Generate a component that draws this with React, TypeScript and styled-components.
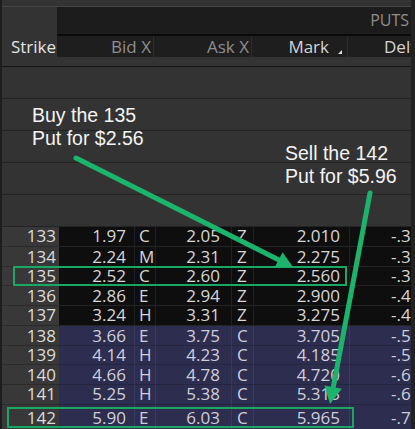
import styled, { createGlobalStyle } from "styled-components";

const GlobalStyle = createGlobalStyle`
  html, body {
    margin: 0;
    padding: 0;
    background: #333333;
  }
`;

const COLS = "57px 76px 21px 76px 22px 96px 63px";

type Quote = {
  strike: string;
  bid: string;
  bidX: string;
  ask: string;
  askX: string;
  mark: string;
  delta: string;
  itm?: boolean;
};

const quotes: Quote[] = [
  { strike: "133", bid: "1.97", bidX: "C", ask: "2.05", askX: "Z", mark: "2.010", delta: "-.33" },
  { strike: "134", bid: "2.24", bidX: "M", ask: "2.31", askX: "Z", mark: "2.275", delta: "-.36" },
  { strike: "135", bid: "2.52", bidX: "C", ask: "2.60", askX: "Z", mark: "2.560", delta: "-.39" },
  { strike: "136", bid: "2.86", bidX: "E", ask: "2.94", askX: "Z", mark: "2.900", delta: "-.43" },
  { strike: "137", bid: "3.24", bidX: "H", ask: "3.31", askX: "Z", mark: "3.275", delta: "-.47" },
  { strike: "138", bid: "3.66", bidX: "E", ask: "3.75", askX: "C", mark: "3.705", delta: "-.51", itm: true },
  { strike: "139", bid: "4.14", bidX: "H", ask: "4.23", askX: "C", mark: "4.185", delta: "-.56", itm: true },
  { strike: "140", bid: "4.66", bidX: "H", ask: "4.78", askX: "C", mark: "4.720", delta: "-.61", itm: true },
  { strike: "141", bid: "5.25", bidX: "H", ask: "5.38", askX: "C", mark: "5.315", delta: "-.66", itm: true },
  { strike: "142", bid: "5.90", bidX: "E", ask: "6.03", askX: "C", mark: "5.965", delta: "-.71", itm: true },
];

const Frame = styled.div`
  position: relative;
  width: 415px;
  height: 429px;
  overflow: hidden;
  background: #333333;
  box-sizing: border-box;
  border-left: 2px solid #1d1d1d;
  border-right: 4px solid #222222;
  font-family: "Open Sans", "DejaVu Sans", sans-serif;
  display: flex;
  flex-direction: column;
`;

const TopStrip = styled.div`
  height: 6px;
  flex: none;
  border-bottom: 1px solid #444444;
`;

const GroupRow = styled.div`
  display: grid;
  grid-template-columns: 55px 1fr;
  height: 29px;
  flex: none;
`;

const PutsBand = styled.div`
  background: #1c1c1c;
  border-bottom: 2px solid #0a0a0a;
  color: #8e8e8e;
  font-size: 16px;
  text-align: right;
  padding-right: 2px;
  line-height: 27px;
`;

const HeadRow = styled.div`
  display: grid;
  grid-template-columns: 55px 97px 98px 96px 63px;
  height: 21px;
  flex: none;
`;

const StrikeHead = styled.div`
  color: #e4e4e4;
  font-size: 17px;
  line-height: 21px;
  text-align: right;
  padding-right: 1px;
`;

const HeadCell = styled.div<{ $bright?: boolean; $left?: number }>`
  position: relative;
  background: #1e1e1e;
  border-right: 1px solid #2c2c2c;
  color: ${({ $bright }) => ($bright ? "#d4d4d4" : "#8e8e8e")};
  font-size: 17px;
  line-height: 21px;
  white-space: nowrap;
  overflow: hidden;
  text-align: ${({ $left }) => ($left !== undefined ? "left" : "right")};
  padding: ${({ $left }) => ($left !== undefined ? `0 0 0 ${$left}px` : "0 2px 0 0")};
  &:last-child {
    border-right: none;
  }
`;

const SortMark = styled.span`
  display: inline-block;
  width: 0;
  height: 0;
  margin-left: 9px;
  border-left: 4px solid transparent;
  border-bottom: 4px solid #e0e0e0;
  vertical-align: -1px;
`;

const Gap = styled.div`
  height: 9px;
  flex: none;
  border-bottom: 1px solid #161616;
`;

const EmptyRow = styled.div`
  height: 31px;
  flex: none;
  background: #333333;
  border-bottom: 1px solid #232323;
`;

const DataRow = styled.div<{ $itm?: boolean; $h: number }>`
  display: grid;
  grid-template-columns: ${COLS};
  height: ${({ $h }) => $h}px;
  flex: none;
  font-size: 17px;
  line-height: ${({ $h }) => $h - 1}px;
  color: ${({ $itm }) => ($itm ? "#cfcfdc" : "#d6d6d6")};
  --cell: ${({ $itm }) => ($itm ? "#2d2d4f" : "#0e0e0e")};
  --hline: ${({ $itm }) => ($itm ? "#25253f" : "#242424")};
  --vline: ${({ $itm }) => ($itm ? "#3a3a5a" : "#202020")};
`;

const StrikeCell = styled.div`
  background: #383838;
  border-bottom: 1px solid #2a2a2a;
  text-align: right;
  padding-right: 3px;
  color: #dcdcdc;
`;

const Cell = styled.div<{ $pad: string; $align: "left" | "right"; $clip?: boolean }>`
  background: var(--cell);
  border-bottom: 1px solid var(--hline);
  border-right: 1px solid var(--vline);
  text-align: ${({ $align }) => $align};
  padding: ${({ $pad }) => $pad};
  white-space: nowrap;
  overflow: ${({ $clip }) => ($clip ? "hidden" : "visible")};
  &:last-child {
    border-right: none;
  }
`;

const Box = styled.div<{ $x: number; $y: number; $w: number; $h: number }>`
  position: absolute;
  left: ${({ $x }) => $x}px;
  top: ${({ $y }) => $y}px;
  width: ${({ $w }) => $w}px;
  height: ${({ $h }) => $h}px;
  box-sizing: border-box;
  border: 2px solid #1aa763;
  pointer-events: none;
`;

const Note = styled.div<{ $x: number; $y: number }>`
  position: absolute;
  left: ${({ $x }) => $x}px;
  top: ${({ $y }) => $y}px;
  font-family: "Liberation Sans", Arial, sans-serif;
  font-size: 19.5px;
  line-height: 23px;
  color: #f4f4f4;
  white-space: nowrap;
`;

const Arrows = styled.svg`
  position: absolute;
  left: -2px;
  top: 0;
  pointer-events: none;
`;

const GREEN = "#1cb36c";

export default function App() {
  return (
    <>
      <GlobalStyle />
      <Frame>
        <TopStrip />
        <GroupRow>
          <div />
          <PutsBand>PUTS</PutsBand>
        </GroupRow>
        <HeadRow>
          <StrikeHead>Strike</StrikeHead>
          <HeadCell>Bid X</HeadCell>
          <HeadCell>Ask X</HeadCell>
          <HeadCell $bright style={{ paddingRight: 5 }}>
            Mark<SortMark />
          </HeadCell>
          <HeadCell $bright $left={36}>
            Delta
          </HeadCell>
        </HeadRow>
        <Gap />
        {[0, 1, 2, 3, 4].map((i) => (
          <EmptyRow key={i} />
        ))}
        {quotes.map((q, i) => (
          <DataRow key={q.strike} $itm={q.itm} $h={i === quotes.length - 1 ? 26 : i % 2 ? 20 : 19.5}>
            <StrikeCell>{q.strike}</StrikeCell>
            <Cell $align="right" $pad="0 8px 0 0">{q.bid}</Cell>
            <Cell $align="left" $pad="0 0 0 4px">{q.bidX}</Cell>
            <Cell $align="right" $pad="0 11px 0 0">{q.ask}</Cell>
            <Cell $align="left" $pad="0 0 0 5px">{q.askX}</Cell>
            <Cell $align="right" $pad="0 9px 0 0">{q.mark}</Cell>
            <Cell $align="left" $pad="0 0 0 41px" $clip>{q.delta}</Cell>
          </DataRow>
        ))}

        <Box $x={11} $y={266} $w={334} $h={20} />
        <Box $x={5} $y={407} $w={347} $h={21} />

        <Note $x={30} $y={104}>
          Buy the 135
          <br />
          Put for $2.56
        </Note>
        <Note $x={283} $y={142}>
          Sell the 142
          <br />
          Put for $5.96
        </Note>

        <Arrows width="415" height="429" viewBox="0 0 415 429">
          <line x1="76" y1="158" x2="280" y2="260.5" stroke={GREEN} strokeWidth="5" strokeLinecap="round" />
          <polygon points="293,267 274.6,267.4 282.6,252.3" fill={GREEN} />
          <line x1="370" y1="193" x2="333.5" y2="386" stroke={GREEN} strokeWidth="5" strokeLinecap="round" />
          <polygon points="330,404 324.5,385.5 341.8,388.8" fill={GREEN} />
        </Arrows>
      </Frame>
    </>
  );
}
